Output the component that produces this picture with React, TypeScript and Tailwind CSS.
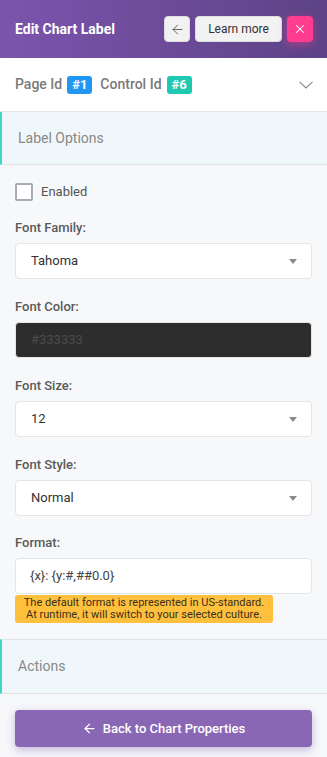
import { ArrowLeft, X } from "lucide-react";

function Caret() {
  return (
    <svg width="8" height="5" viewBox="0 0 8 5" className="fill-[#8a8a8a]">
      <path d="M0 0h8L4 5z" />
    </svg>
  );
}

function Select({ value }: { value: string }) {
  return (
    <div className="h-[36px] bg-white border border-[#e3e5e8] rounded-[4px] flex items-center justify-between pl-[15px] pr-[14px] text-[13px] text-[#333]">
      <span>{value}</span>
      <Caret />
    </div>
  );
}

function Label({ text }: { text: string }) {
  return <div className="text-[13px] font-medium text-[#5a5a5a] mb-[7px] leading-[16px]">{text}</div>;
}

export default function App() {
  return (
    <div className="w-[327px] h-[757px] bg-[#f7f8fa] flex flex-col font-['Roboto',sans-serif] overflow-hidden">
      <div className="h-[58px] shrink-0 bg-gradient-to-r from-[#7c54ad] to-[#5d4386] flex items-center justify-between pl-[15px] pr-[14px]">
        <span className="text-white font-bold text-[14px]">Edit Chart Label</span>
        <div className="flex items-center gap-[5px]">
          <button className="w-[26px] h-[26px] rounded-[4px] bg-[#f2f2f2] border border-[#ddd] flex items-center justify-center text-[#444]">
            <ArrowLeft size={15} strokeWidth={1.3} />
          </button>
          <button className="w-[87px] h-[26px] rounded-[4px] bg-[#f2f2f2] border border-[#ddd] text-[12px] text-[#333]">
            Learn more
          </button>
          <button className="w-[26px] h-[26px] rounded-[4px] bg-[#ff3d8e] shadow-[0_2px_8px_rgba(255,61,142,0.5)] flex items-center justify-center text-white">
            <X size={14} strokeWidth={1.8} />
          </button>
        </div>
      </div>

      <div className="h-[54px] shrink-0 bg-white flex items-center justify-between pl-[15px] pr-[14px] border-b border-[#e3e6ea]">
        <div className="flex items-center text-[14px] font-medium text-[#7a7a7a]">
          <span>Page Id</span>
          <span className="ml-[5px] bg-[#2196f3] text-white text-[13px] font-bold rounded-[3px] px-[5px] leading-[18px]">#1</span>
          <span className="ml-[8px]">Control Id</span>
          <span className="ml-[5px] bg-[#1fc9b0] text-white text-[13px] font-bold rounded-[3px] px-[5px] leading-[18px]">#6</span>
        </div>
        <svg width="14" height="8" viewBox="0 0 14 8" fill="none" stroke="#888" strokeWidth="1.1">
          <path d="M0.5 0.8L7 7L13.5 0.8" />
        </svg>
      </div>

      <div className="h-[53px] shrink-0 bg-[#f0f7fa] border-l-2 border-[#3fd6c5] border-b border-b-[#dfe3e8] flex items-center pl-[16px] text-[14px] text-[#888]">
        Label Options
      </div>

      <div className="px-[15px] pt-[18px]">
        <div className="flex items-center gap-[8px] h-[17px]">
          <div className="w-[18px] h-[18px] rounded-[2px] border-2 border-[#a9adb3] bg-white" />
          <span className="text-[13px] text-[#555]">Enabled</span>
        </div>

        <div className="mt-[20px]">
          <Label text="Font Family:" />
          <Select value="Tahoma" />
        </div>

        <div className="mt-[20px]">
          <Label text="Font Color:" />
          <div className="h-[36px] bg-[#2d2d2d] border border-[#e3e5e8] rounded-[4px] flex items-center pl-[15px] text-[13px] text-[#4a4a4a]">
            #333333
          </div>
        </div>

        <div className="mt-[20px]">
          <Label text="Font Size:" />
          <Select value="12" />
        </div>

        <div className="mt-[20px]">
          <Label text="Font Style:" />
          <Select value="Normal" />
        </div>

        <div className="mt-[19px]">
          <Label text="Format:" />
          <div className="h-[36px] bg-white border border-[#e3e5e8] rounded-[4px] flex items-center pl-[14px] text-[13px] text-[#444]">
            {"{x}: {y:#,##0.0}"}
          </div>
          <div className="mt-[1px] w-[258px] bg-[#ffc03d] rounded-[3px] text-[11px] leading-[12px] text-[#3a2f1a] text-center py-[2px]">
            The default format is represented in US-standard.
            <br />
            At runtime, it will switch to your selected culture.
          </div>
        </div>
      </div>

      <div className="mt-[16px] h-[55px] shrink-0 bg-[#f0f7fa] border-l-2 border-[#3fd6c5] border-y border-y-[#dfe3e8] flex items-center pl-[16px] text-[14px] text-[#888]">
        Actions
      </div>

      <div className="px-[15px] pt-[16px]">
        <button className="w-full h-[37px] rounded-[4px] bg-[#8a67b5] shadow-[0_3px_8px_rgba(138,103,181,0.45)] flex items-center justify-center gap-[6px] text-white text-[13px] font-medium">
          <ArrowLeft size={15} strokeWidth={2} />
          Back to Chart Properties
        </button>
      </div>
    </div>
  );
}
